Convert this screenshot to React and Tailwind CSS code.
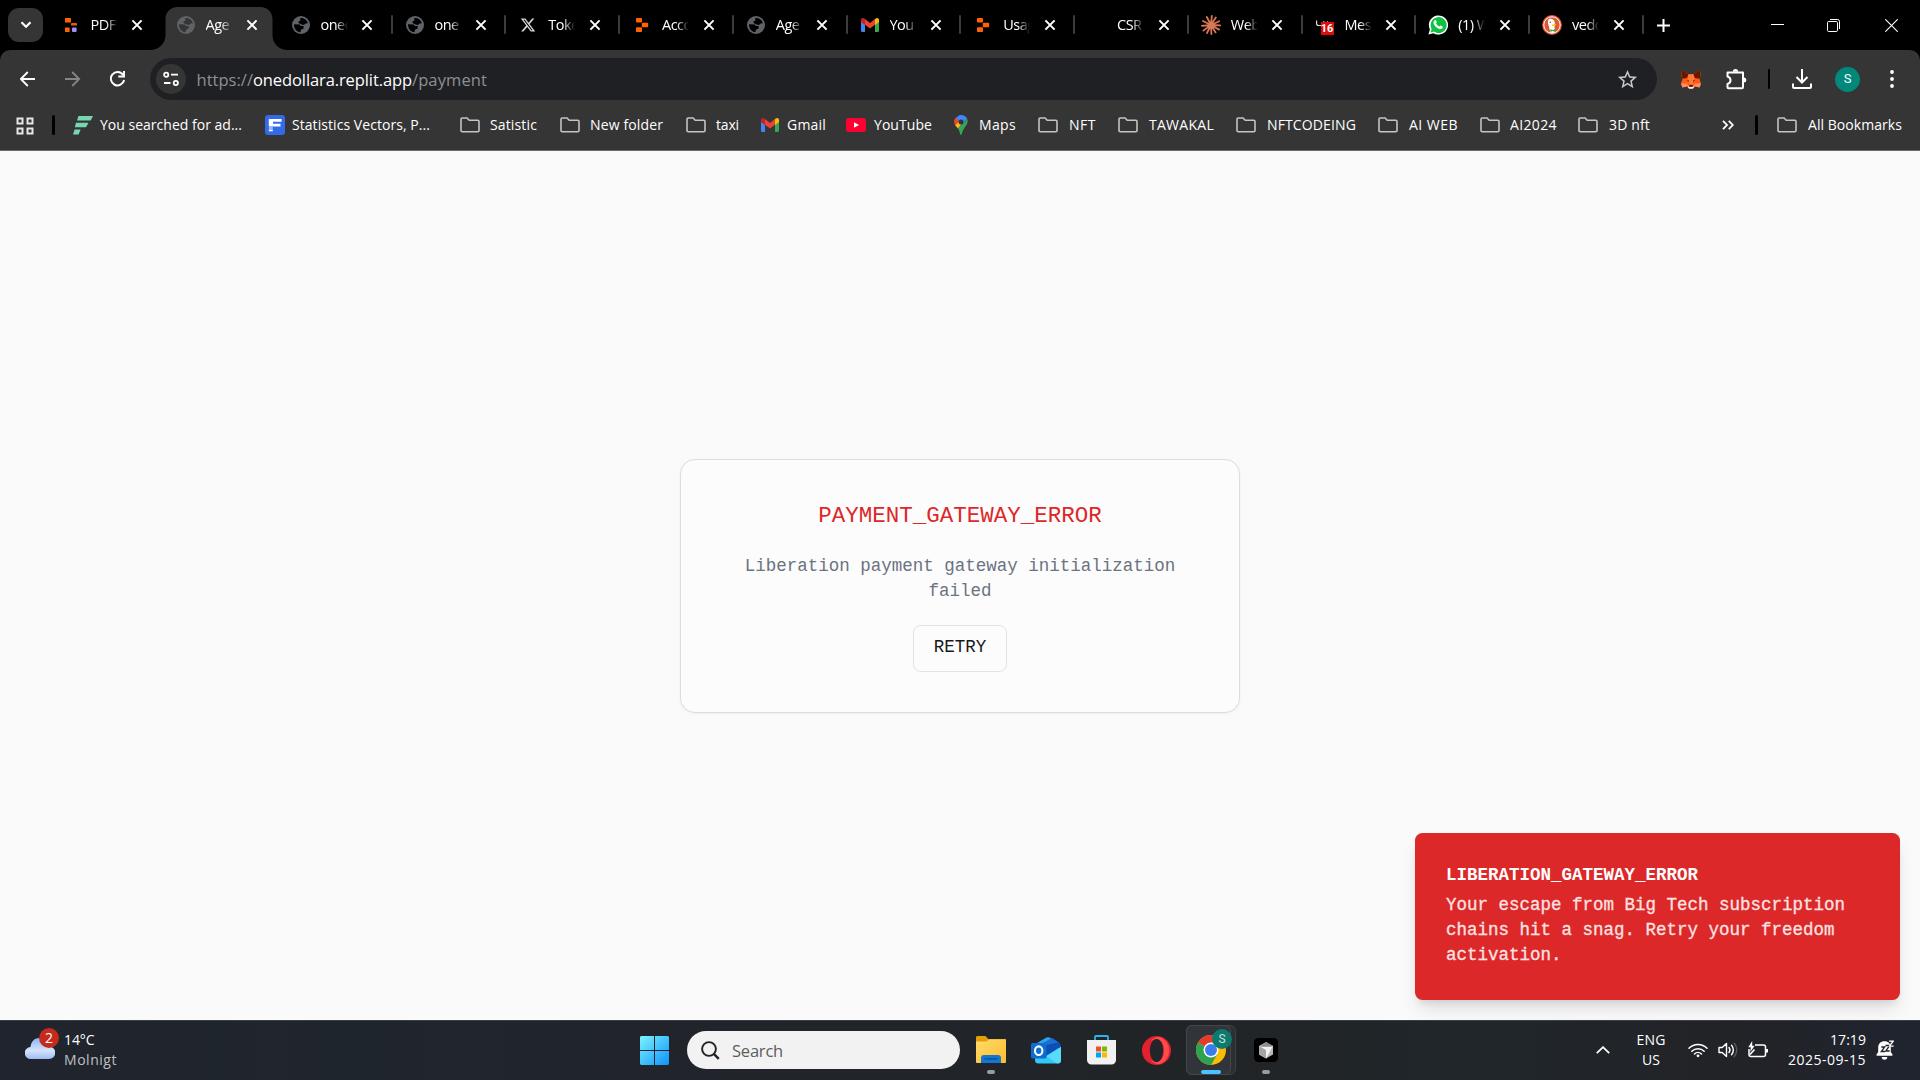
import { useLayoutEffect, useRef, useState } from "react";
import { FaXTwitter } from "react-icons/fa6";
import { MdStarBorder } from "react-icons/md";

/* Text spread over a fixed width by letter spacing. */
function Fit({ w, children, className = "" }) {
  const ref = useRef(null);
  const [spacing, setSpacing] = useState(0);
  useLayoutEffect(() => {
    const natural = ref.current.getBoundingClientRect().width;
    setSpacing((w - natural) / String(children).length);
  }, []);
  return (
    <span ref={ref} className={`inline-block shrink-0 whitespace-pre ${className}`} style={{ letterSpacing: `${spacing}px` }}>
      {children}
    </span>
  );
}

/* ---------- favicons ---------- */
const Globe = ({ active }) => (
  <svg viewBox="0 0 18 18" className="h-[18px] w-[18px]">
    <circle cx="9" cy="9" r="9" fill="#5f6368" />
    <g className={active ? "fill-[#353535]" : "fill-black"}>
      <path d="M2 8.200 7.600 8.600 9 10h2.600v2.600l-2.400.9-.8 2.700C4.800 15.800 1.800 12.600 2 8.200z" />
      <path d="M8.200 2.100C12.200 1.900 15 4 15.900 7.200L13.600 7.400 12 9 9.600 8.400 7 7.200 6.200 5.800 8.400 4.600z" />
    </g>
  </svg>
);

const ReplitMulti = () => (
  <svg viewBox="0 0 14 16" className="h-4 w-3.5">
    <rect x="1" y="1" width="6" height="4.5" rx=".6" fill="#ff6200" />
    <rect x="7" y="6" width="6" height="2.6" rx=".4" fill="#e85c00" />
    <rect x="1" y="10.5" width="4.6" height="4.5" rx=".6" fill="#ff6200" />
    <rect x="8" y="10.5" width="4.6" height="4.5" rx="1" fill="#a78bfa" />
  </svg>
);

const Replit = () => (
  <svg viewBox="0 0 14 16" className="h-4 w-3.5">
    <rect x="1" y="1" width="6" height="4.6" rx=".8" fill="#ff6200" />
    <rect x="6.8" y="5.7" width="6.4" height="4.5" rx=".8" fill="#ff6200" />
    <rect x="1" y="10.3" width="6" height="4.7" rx=".8" fill="#ff6200" />
  </svg>
);

const Gmail = () => (
  <svg viewBox="0 0 18 14" className="h-3.5 w-[18px]">
    <path d="M0 3v9.8c0 .7.5 1.2 1.2 1.2H4V6z" fill="#4285f4" />
    <path d="M18 3v9.8c0 .7-.5 1.2-1.2 1.2H14V6z" fill="#34a853" />
    <path d="M14 1.2V7l4-3V1.9C18 .2 16-.6 14.7.5z" fill="#fbbc04" />
    <path d="M4 6.8V1.1l5 3.8 5-3.8v5.7L9 10.6z" fill="#ea4335" />
    <path d="M0 1.9V4l4 3V1.2L3.3.5C2-.6 0 .2 0 1.9z" fill="#c5221f" />
  </svg>
);

const Claude = () => (
  <svg viewBox="0 0 20 20" className="h-5 w-5" stroke="#d97757" strokeWidth="1.8" strokeLinecap="round">
    <path d="M10 10 10.8 1M10 10 14.8 2.4M10 10 18.2 6.2M10 10 19.2 10.4M10 10 18 14.6M10 10 14.6 17.4M10 10 10.4 19M10 10 6 18M10 10 2.4 15.6M10 10 .9 10.9M10 10 2 6M10 10 5.8 2" />
  </svg>
);

const Messenger16 = () => (
  <span className="relative block h-5 w-5">
    <svg viewBox="0 0 20 20" className="h-5 w-5">
      <path d="M1.600 5.500V8.500c0 1.300.8 2 2.200 2H6" stroke="#ddd" strokeWidth="1.200" fill="none" />
      <path d="M8 6.500h1.500M12 6.500h1" stroke="#999" strokeWidth="1" />
    </svg>
    <span className="absolute top-[7px] left-[6px] flex h-[13px] w-[13px] items-center justify-center bg-[#e00b0b] font-['Roboto'] text-[11px] leading-none font-bold text-white">
      16
    </span>
  </span>
);

const WhatsApp = () => (
  <svg viewBox="0 0 20 20" className="h-5 w-5">
    <path d="M.4 19.6 1.9 14.4A9.6 9.6 0 1 1 5.4 18.2z" fill="#fff" />
    <path d="M2.5 17.5 3.6 13.9A8 8 0 1 1 6 16.6z" fill="#0fc143" />
    <path d="M6.8 5.3c.5-.4 1-.3 1.2.1l.7 1.6c.1.3 0 .5-.7 1.3.8 1.6 2 2.6 3.5 3.3.8-1 1-1.100 1.300-1l1.700.800c.4.200.4.600.2 1.100-.6 1.500-2.200 1.800-3.900 1.200-2.400-.900-4.700-3.300-5.200-5.500-.200-1.200.3-2.200 1.200-2.900z" fill="#fff" />
  </svg>
);

const Duck = () => (
  <svg viewBox="0 0 20 20" className="h-5 w-5">
    <circle cx="10" cy="10" r="9.9" fill="#de5833" />
    <circle cx="10" cy="10" r="8.2" fill="none" stroke="#fff" strokeWidth="1" />
    <path d="M6 6.200C6.200 4 8 3.600 9.600 4c2.200.4 3.300 2 3.200 4.200l-.3 2.800.5 6.300c-1.700.8-3.400.8-4.800.3L7 11.600c-.6-1.700-1.300-3.600-1-5.400z" fill="#fff" />
    <path d="M10 9.600c1.300-.7 3-.7 4.300-.3-.8 1.200-2.400 1.900-4.300 1.700z" fill="#fdd20a" />
    <path d="M8.200 14.200l2.600.8 2.600-.9v2.800l-2.600-.8-2.600.7z" fill="#3ca82b" />
    <circle cx="8.200" cy="7.200" r=".7" fill="#2d4f8e" />
  </svg>
);

const Blank = () => <span className="block h-5 w-5" />;

const CloseX = ({ className = "" }) => (
  <svg viewBox="0 0 12 12" className={`h-3 w-3 shrink-0 ${className}`} stroke="#fff" strokeWidth="2">
    <path d="M1.400 1.400 10.600 10.600M10.600 1.400 1.400 10.600" />
  </svg>
);

const TABS = [
  { title: "PDF", icon: ReplitMulti, cls: "w-[115px]" },
  { title: "Age", icon: Globe, cls: "w-[115px]", active: true },
  { title: "oned", icon: Globe, cls: "w-[114px]", sep: true },
  { title: "one", icon: Globe, sep: true },
  { title: "Toke", icon: () => <FaXTwitter className="h-4 w-4 text-[#d8d8d8]" />, sep: true },
  { title: "Acco", icon: Replit, sep: true },
  { title: "Age", icon: Globe, sep: true },
  { title: "You", icon: Gmail, sep: true },
  { title: "Usag", icon: Replit, sep: true },
  { title: "CSR", icon: Blank, sep: true },
  { title: "Web", icon: Claude, sep: true },
  { title: "Mes", icon: Messenger16, sep: true },
  { title: "(1) W", icon: WhatsApp, sep: true },
  { title: "vedd", icon: Duck, sep: true },
];

function Tab({ title, icon: Icon, cls = "w-[113.75px]", active, sep }) {
  return (
    <div className={`relative flex h-[50px] shrink-0 items-center ${cls}`}>
      {active && (
        <svg viewBox="0 0 138 43" className="absolute bottom-0 left-[-13px] h-[43px] w-[138px]" fill="#353535">
          <path d="M0 43c8 0 15.500-6 15.500-15V12c0-7 5-12 12-12h83c7 0 12 5 12 12v16c0 9 7 15 15.500 15z" />
        </svg>
      )}
      <span className="relative ml-3 flex h-6 w-[22px] shrink-0 items-center justify-center">
        <Icon active={active} />
      </span>
      <span className="relative ml-[9px] w-[27px] shrink-0 overflow-hidden text-[14.5px] leading-5 tracking-[-0.5px] whitespace-nowrap text-white [mask-image:linear-gradient(to_right,#000_55%,transparent_100%)]">
        {title}
      </span>
      <CloseX className="relative ml-[13.500px]" />
      {sep && <span className="absolute top-[15px] right-[-1px] h-[19px] w-0.5 rounded bg-[#3c3c3c]" />}
    </div>
  );
}

/* ---------- bookmarks ---------- */
const Folder = () => (
  <svg viewBox="0 0 20 16" className="h-4 w-5" fill="none" stroke="#c4c4c4" strokeWidth="1.600">
    <path d="M1 2.200C1 1.500 1.500 1 2.200 1h4.900l2.100 2.300h8.600c.7 0 1.200.5 1.200 1.200v9c0 .7-.5 1.200-1.200 1.200H2.200c-.7 0-1.200-.5-1.200-1.200z" />
  </svg>
);
const FreeF = () => (
  <svg viewBox="0 0 20 19" className="h-[19px] w-5" fill="#76d7b0">
    <path d="M5.500 0H20l-2.300 4.600H4zM3 6.800h12.500L13 11.200H1.800zM1.600 13.600h6L5.600 18.500H0z" />
  </svg>
);
const BlueF = () => (
  <svg viewBox="0 0 20 20" className="h-5 w-5">
    <rect width="20" height="20" rx="3" fill="#336aea" />
    <path d="M3.800 4h12.800v2.800H8v2h7.500v2.800H3.800zM3.800 12.600h4v1h-4zM3.800 14.600h4v1.600h-4z" fill="#fff" />
  </svg>
);
const YouTube = () => (
  <svg viewBox="0 0 20 14" className="h-3.5 w-5">
    <rect width="20" height="14" rx="3" fill="#ff0033" />
    <path d="M8 4.200v5.600L13 7z" fill="#fff" />
  </svg>
);
const MapsPin = () => (
  <svg viewBox="0 0 14 20" className="h-5 w-[14px]">
    <path d="M7 0a7 7 0 0 1 6.300 4L4.200 13.200 1.600 10.500A7 7 0 0 1 7 0z" fill="#4285f4" />
    <path d="M1.500 2.700 7 7.200 2.200 11.500A7 7 0 0 1 1.500 2.700z" fill="#ea4335" />
    <path d="M1.300 10.200 7 4.500v5l-3 4z" fill="#fbbc04" />
    <path d="M13.400 4.200C15 9 10 12 8.200 17.500 7.800 19.200 7.500 20 7 20s-.8-.8-1.100-2c-.4-1.800-1-3.200-1.900-4.500z" fill="#34a853" />
    <circle cx="7" cy="7" r="2.500" fill="#353535" />
  </svg>
);

const BOOKMARKS = [
  { cell: "ml-[15px]", gap: "ml-[7px]", icon: FreeF, text: "You searched for ad...", w: 142 },
  { cell: "ml-[23px]", gap: "ml-[7px]", icon: BlueF, text: "Statistics Vectors, P...", w: 138 },
  { cell: "ml-[30px]", gap: "ml-[10px]", icon: Folder, text: "Satistic", w: 47 },
  { cell: "ml-[23px]", gap: "ml-[10px]", icon: Folder, text: "New folder", w: 73 },
  { cell: "ml-[23px]", gap: "ml-[10px]", icon: Folder, text: "taxi", w: 23 },
  { cell: "ml-[22px]", gap: "ml-[8px]", icon: Gmail, text: "Gmail", w: 39 },
  { cell: "ml-[20px]", gap: "ml-[8px]", icon: YouTube, text: "YouTube", w: 58 },
  { cell: "ml-[22px]", gap: "ml-[11px]", icon: MapsPin, text: "Maps", w: 37 },
  { cell: "ml-[22px]", gap: "ml-[11px]", icon: Folder, text: "NFT", w: 27 },
  { cell: "ml-[22px]", gap: "ml-[11px]", icon: Folder, text: "TAWAKAL", w: 65 },
  { cell: "ml-[22px]", gap: "ml-[11px]", icon: Folder, text: "NFTCODEING", w: 89 },
  { cell: "ml-[22px]", gap: "ml-[11px]", icon: Folder, text: "AI WEB", w: 49 },
  { cell: "ml-[22px]", gap: "ml-[10px]", icon: Folder, text: "AI2024", w: 47 },
  { cell: "ml-[21px]", gap: "ml-[11px]", icon: Folder, text: "3D nft", w: 41 },
];

function Bookmark({ cell, gap, icon: Icon, text, w }) {
  return (
    <div className={`flex shrink-0 items-center ${cell}`}>
      <Icon />
      <Fit w={w} className={`text-[14px] leading-5 text-white ${gap}`}>{text}</Fit>
    </div>
  );
}

/* ---------- toolbar ---------- */
const Fox = () => (
  <svg viewBox="0 0 20 19" className="h-[19px] w-5">
    <path d="M1.200 0 7.500 4.300h5L18.800 0 19.800 4.500 18.600 9.500 20 13.500 18.600 17.600 14.200 16.600 12 18.600H8L5.800 16.600 1.400 17.600 0 13.500 1.400 9.500.2 4.500z" fill="#ff5c16" />
    <path d="M1.200 0 7.500 4.300 6 8 1.400 8.800.4 4.500zM18.800 0 12.500 4.300 14 8l4.600.8 1-4.300z" fill="#661800" />
    <path d="M7.500 4.300h5L13.200 9 11.600 14H8.400L6.800 9z" fill="#ff7a3a" />
    <path d="M0 13.500h6l1.500 2.300-1.700.8-4.400 1zM20 13.500h-6l-1.500 2.300 1.700.8 4.400 1z" fill="#ff8d5d" />
    <path d="M5.600 10.200l2.300.4.100 1.200zM14.400 10.200l-2.300.4-.1 1.200z" fill="#3a1a10" />
    <path d="M7.400 15.800 8.400 17h3.200l1-1.200.3 1.700-1 1.300H8.100l-1-1.300z" fill="#f3ecf5" />
    <path d="M8.500 15h3l.3 1.700H8.200z" fill="#3a1a10" />
  </svg>
);

function TabStrip() {
  return (
    <div className="flex h-[50px] bg-black">
      <div className="mt-2 ml-2 flex h-[34px] w-[35px] shrink-0 items-center justify-center rounded-[11px] bg-[#353535]">
        <svg viewBox="0 0 12 8" className="h-2 w-3" fill="none" stroke="#fff" strokeWidth="2.200">
          <path d="M1.500 1.200 6 5.700l4.500-4.500" />
        </svg>
      </div>
      <div className="ml-[4.500px] flex shrink-0">
        {TABS.map((t, i) => (
          <Tab key={i} {...t} />
        ))}
      </div>
      <div className="flex flex-1 items-center">
        <svg viewBox="0 0 13 13" className="ml-[14.500px] h-[13px] w-[13px]" stroke="#fff" strokeWidth="2">
          <path d="M6.500 0v13M0 6.500h13" />
        </svg>
        <svg viewBox="0 0 13 13" className="ml-[101px] h-[13px] w-[13px]" stroke="#fff" strokeWidth="1">
          <path d="M0 5.500h13" />
        </svg>
        <svg viewBox="0 0 13 13" className="ml-[43px] h-[13px] w-[13px]" fill="none" stroke="#fff" strokeWidth="1">
          <rect x=".5" y="2.500" width="10" height="10" rx="1.200" />
          <path d="M3 .5h7.500a2 2 0 0 1 2 2V10" />
        </svg>
        <svg viewBox="0 0 13 13" className="ml-[45px] h-[13px] w-[13px]" stroke="#fff" strokeWidth="1.100">
          <path d="M.3.3l12.400 12.400M12.700.3.3 12.700" />
        </svg>
      </div>
    </div>
  );
}

function Toolbar() {
  return (
    <div className="flex h-[58px] items-center">
      <svg viewBox="0 0 16 16" className="ml-5 h-4 w-4" fill="none" stroke="#fff" strokeWidth="1.800">
        <path d="M15 8H1M7.800 1 .8 8l7 7" />
      </svg>
      <svg viewBox="0 0 16 16" className="ml-[29px] h-4 w-4" fill="none" stroke="#858585" strokeWidth="1.800">
        <path d="M0 8h14M7.200 1l7 7-7 7" />
      </svg>
      <svg viewBox="0 0 16 16" className="ml-[29px] h-4 w-4" fill="none" stroke="#fff" strokeWidth="2">
        <path d="M13.100 4A6.700 6.700 0 1 0 14.100 9" />
        <path d="M14 0v5.500H8.300" strokeWidth="1.900" />
      </svg>
      <div className="ml-[24px] flex h-[42px] w-[1507px] items-center rounded-full bg-[#1f2024]">
        <div className="ml-[6px] flex h-[30px] w-[30px] items-center justify-center rounded-full bg-[#353535]">
          <svg viewBox="0 0 16 16" className="h-4 w-4" fill="none" stroke="#fff" strokeWidth="1.800">
            <circle cx="3.200" cy="3.700" r="2.100" />
            <path d="M8 3.700h7M1 12h6.500" />
            <circle cx="12.800" cy="12" r="2.100" />
          </svg>
        </div>
        <div className="mt-px ml-[10.500px] flex text-[16.500px] leading-6">
          <Fit w={56.500} className="text-[#8e8f92]">https://</Fit>
          <Fit w={159} className="text-white">onedollara.replit.app</Fit>
          <Fit w={75} className="text-[#8e8f92]">/payment</Fit>
        </div>
        <MdStarBorder className="mr-[18px] ml-auto h-[23px] w-[23px] text-[#c7c7c7]" />
      </div>
      <div className="ml-[23.500px]"><Fox /></div>
      <svg viewBox="0 0 21 21" className="ml-[25.500px] h-[21px] w-[21px]" fill="none" stroke="#fff" strokeWidth="2">
        <path d="M1.500 3.500H17v14.700c0 .6-.4 1-1 1H2.500c-.6 0-1-.4-1-1V15c4-1 4-6.500 0-7.500z" strokeLinejoin="round" />
        <path d="M6.800 2.800a2.700 2.700 0 0 1 5.400 0zM17.800 8.600a2.500 2.500 0 0 1 0 5z" fill="#fff" stroke="none" />
      </svg>
      <span className="ml-[21px] h-5 w-0.5 rounded bg-black" />
      <svg viewBox="0 0 20 20" className="ml-[22px] h-5 w-5" fill="none" stroke="#fff" strokeWidth="2">
        <path d="M10 0v13M4.500 8l5.500 5.500L15.500 8M1 14.500V18c0 .6.400 1 1 1h16c.6 0 1-.4 1-1v-3.500" />
      </svg>
      <span className="ml-[23px] flex h-[25px] w-[25px] items-center justify-center rounded-full bg-[#00897b] font-['Roboto'] text-[13px] text-white">S</span>
      <svg viewBox="0 0 4 20" className="ml-[30px] h-5 w-1" fill="#fff">
        <circle cx="2" cy="3" r="1.900" /><circle cx="2" cy="10" r="1.900" /><circle cx="2" cy="17" r="1.900" />
      </svg>
    </div>
  );
}

function BookmarksBar() {
  return (
    <div className="flex h-[42px] items-center pb-2">
      <svg viewBox="0 0 18 18" className="mt-px ml-[15.500px] h-[18px] w-[18px] shrink-0" fill="none" stroke="#e6e6e6" strokeWidth="2">
        <path d="M1.500 1.500h5v5h-5zM11.500 1.500h5v5h-5zM1.500 11.500h5v5h-5zM11.500 11.500h5v5h-5z" />
      </svg>
      <span className="ml-[18.500px] h-5 w-[3px] shrink-0 rounded bg-black" />
      <div className="ml-[3px] flex items-center">
        {BOOKMARKS.map((b) => (
          <Bookmark key={b.text} {...b} />
        ))}
      </div>
      <svg viewBox="0 0 12 10" className="ml-auto h-2.5 w-3 shrink-0" fill="none" stroke="#fff" strokeWidth="1.800">
        <path d="M1 .8 5 5 1 9.200M6.800.8l4 4.200-4 4.200" />
      </svg>
      <span className="ml-[21px] h-5 w-[3px] shrink-0 rounded bg-black" />
      <div className="mr-[18px] ml-[19px] flex items-center">
        <Folder />
        <Fit w={94} className="ml-[11px] text-[14px] leading-5 text-white">All Bookmarks</Fit>
      </div>
    </div>
  );
}

/* ---------- page ---------- */
function Page() {
  return (
    <main className="relative flex h-[869px] items-center justify-center overflow-hidden bg-[#fafafa] font-['Courier_New','Liberation_Mono',monospace]">
      <section className="flex h-[254px] w-[560px] flex-col items-center rounded-[15px] border border-[#dcdde2] bg-[#fcfcfc] px-10 pt-[41px] text-center shadow-[0_1px_3px_rgba(0,0,0,0.05)]">
        <h1 className="text-[22.500px] leading-[31px] text-[#dc2828]">PAYMENT_GATEWAY_ERROR</h1>
        <p className="mt-[22px] text-[17.500px] leading-[25px] text-[#6b7280]">Liberation payment gateway initialization failed</p>
        <button className="mt-[21.500px] flex h-[47px] w-[94px] shrink-0 items-center justify-center rounded-[7.500px] border border-[#e2e3e6] bg-[#fcfcfc] pb-0.5 text-[17.500px] text-[#18181b]">
          RETRY
        </button>
      </section>
      <aside className="absolute right-5 bottom-5 flex h-[167px] w-[485px] flex-col rounded-[7.500px] bg-[#dc2828] px-[31px] pt-[30px] text-[17.500px] leading-[25px] shadow-[0_12px_19px_-4px_rgba(0,0,0,0.12),0_5px_8px_-4px_rgba(0,0,0,0.12)]">
        <strong className="font-bold text-white">LIBERATION_GATEWAY_ERROR</strong>
        <p className="mt-[5px] text-[#fbe2e2] [-webkit-text-stroke:0.3px_#fbe2e2]">
          Your escape from Big Tech subscription chains hit a snag. Retry your freedom activation.
        </p>
      </aside>
    </main>
  );
}

/* ---------- taskbar ---------- */
function Weather() {
  return (
    <div className="flex w-[640px] shrink-0">
      <div className="relative ml-[25px] h-[59px] w-[35px] shrink-0">
        <svg viewBox="0 0 30 21" className="absolute top-[17px] left-0 h-[21px] w-[30px]">
          <defs>
            <linearGradient id="cloud" x1="0" y1="0" x2="0" y2="1">
              <stop offset="0" stopColor="#8fb4f5" /><stop offset=".6" stopColor="#d5e3fb" /><stop offset="1" stopColor="#9cbcf4" />
            </linearGradient>
          </defs>
          <path d="M6 21a6 6 0 0 1-.5-12C6 4 9 0 14 0c5 0 8 3.500 8.600 8.500H24a6.200 6.200 0 0 1 0 12.500z" fill="url(#cloud)" />
        </svg>
        <span className="absolute top-[7px] left-[14px] flex h-5 w-5 items-center justify-center rounded-full bg-[#c42b1c] text-[14px] leading-none text-white">2</span>
      </div>
      <div className="mt-[9px] ml-1 flex flex-col items-start text-[14px] leading-5">
        <Fit w={30.500} className="text-white">14°C</Fit>
        <Fit w={53} className="text-[#bfc0c2]">Molnigt</Fit>
      </div>
    </div>
  );
}

const Windows = () => (
  <svg viewBox="0 0 29 29" className="h-[29px] w-[29px] shrink-0">
    <defs>
      <linearGradient id="win" gradientUnits="userSpaceOnUse" x1="0" y1="0" x2="29" y2="29">
        <stop offset="0" stopColor="#7df3ff" /><stop offset="1" stopColor="#0c93fb" />
      </linearGradient>
    </defs>
    <path d="M1 0h13v14H0V1zM15 0h13l1 1v13H15zM0 15h14v14H1l-1-1zM15 15h14v13l-1 1H15z" fill="url(#win)" />
  </svg>
);
const Explorer = () => (
  <svg viewBox="0 0 30 28" className="h-7 w-[30px]">
    <defs>
      <linearGradient id="exp" x1="0" y1="0" x2="1" y2="1"><stop offset="0" stopColor="#ffdb6b" /><stop offset="1" stopColor="#fdbc2c" /></linearGradient>
    </defs>
    <path d="M0 1.500C0 .7.600 0 1.500 0h8l3 3.200H29c.6 0 1 .4 1 1V10H0z" fill="#dfa00c" />
    <path d="M0 5.500h10.500l2.500-2.300h16c.6 0 1 .4 1 1V26a1 1 0 0 1-1 1H1a1 1 0 0 1-1-1z" fill="url(#exp)" />
    <path d="M5 27v-5a3 3 0 0 1 3-3h14a3 3 0 0 1 3 3v5z" fill="#1177d0" />
    <path d="M9 22.800h12" stroke="#0a4a8c" strokeWidth="1.300" strokeLinecap="round" />
  </svg>
);
const Outlook = () => (
  <svg viewBox="0 0 30 27" className="h-[27px] w-[30px]">
    <path d="M6 6 15.500.6a3 3 0 0 1 3 0L28 6l2 4-14 8-10-4z" fill="#2fa4ea" />
    <path d="M15 15 29 5.500l1 3.500v4l-14 7z" fill="#0a44a6" />
    <path d="M12 6l9-5 7 4.500L15 14z" fill="#1a6fd0" />
    <path d="M4 14h12l14-4v13a3.500 3.500 0 0 1-3.500 3.500H7.500A3.500 3.500 0 0 1 4 23z" fill="#35c8f5" />
    <path d="M15 19 30 10v13a3.500 3.500 0 0 1-3.500 3.500z" fill="#59dcfb" />
    <path d="M14 8.500 27.500 5.200 30 9.500 15 19z" fill="#0b4fb5" />
    <rect y="6" width="15.500" height="15.500" rx="1.500" fill="#0f6cd0" />
    <ellipse cx="7.700" cy="13.700" rx="3.700" ry="4.300" fill="none" stroke="#fff" strokeWidth="2.100" />
  </svg>
);
const Store = () => (
  <svg viewBox="0 0 29 30" className="h-[30px] w-[29px]">
    <path d="M8 6V1.800C8 1.300 8.300 1 8.800 1h11.400c.5 0 .8.300.8.800V6" fill="none" stroke="#25b4ec" strokeWidth="1.800" />
    <path d="M0 5h29v20a4.500 4.500 0 0 1-4.500 4.500h-20A4.500 4.500 0 0 1 0 25z" fill="#f1f1f1" />
    <path d="M9 11.500h5v5H9z" fill="#f25022" /><path d="M15 11.500h5v5h-5z" fill="#7fba00" />
    <path d="M9 17.500h5v5H9z" fill="#00a4ef" /><path d="M15 17.500h5v5h-5z" fill="#ffb900" />
  </svg>
);
const Opera = () => (
  <svg viewBox="0 0 29 29" className="h-[29px] w-[29px]">
    <circle cx="14.500" cy="14.500" r="14.500" fill="#e3202e" />
    <path d="M18 1a14.500 14.500 0 0 1 0 27c-4 .5-7-1-9-4 9 4 13-1 13-9.500S18 1 9 5c2-3 5-4.500 9-4z" fill="#ff4b4b" />
    <ellipse cx="14.500" cy="14.500" rx="6.700" ry="11.500" fill="#22262a" />
  </svg>
);
const Chrome = () => (
  <svg viewBox="0 0 30 30" className="h-[30px] w-[30px]">
    <circle cx="15" cy="15" r="15" fill="#fbbc04" />
    <path d="M15 15 2 7.500A15 15 0 0 1 28 7.500H15z" fill="#e33b2e" />
    <path d="M2 7.500A15 15 0 0 0 15 30l6.500-11.300L15 15z" fill="#2fa24f" />
    <circle cx="15" cy="15" r="7.500" fill="#fff" />
    <circle cx="15" cy="15" r="6" fill="#3b7ded" />
  </svg>
);
const Cursor = () => (
  <svg viewBox="0 0 24 24" className="h-6 w-6">
    <rect width="24" height="24" rx="4.500" fill="#000" />
    <path d="M12 4l7 4v8.500L12 20.500l-7-4V8z" fill="#b9b9b9" />
    <path d="M5 8l7 4v8.500l-7-4z" fill="#a4a4a4" />
    <path d="M5 8h14l-7 12.500V12z" fill="#f2f2f2" />
    <path d="M12 4l7 4-2 .8H6z" fill="#8c8c8c" />
  </svg>
);

function Taskbar() {
  return (
    <footer className="flex h-[60px] border-t border-[#3c3f43] bg-[linear-gradient(90deg,#20242e_0%,#1f262b_18%,#21252b_35%,#212427_60%,#20262a_78%,#222327_90%,#20242f_100%)]">
      <Weather />
      <div className="flex h-[58px] w-[29px] items-center"><Windows /></div>
      <div className="mt-[10px] ml-[18px] flex h-[38px] w-[273px] shrink-0 items-center rounded-full bg-[#f2f2f2]">
        <svg viewBox="0 0 19 19" className="ml-[14px] h-[19px] w-[19px]" fill="none" stroke="#222" strokeWidth="1.900">
          <circle cx="8" cy="8" r="6.900" />
          <path d="M12.800 12.800 17.800 17.800" strokeWidth="2.400" />
        </svg>
        <Fit w={51} className="mt-px ml-3 text-[16.500px] leading-6 text-[#5d5d5d]">Search</Fit>
      </div>
      <div className="ml-4 flex">
        {[Explorer, Outlook, Store, Opera, Chrome, Cursor].map((Icon, i) => (
          <div key={i} className="relative mr-[25px] flex h-[58px] w-[30px] items-center justify-center">
            {i === 4 && (
              <>
                <span className="absolute top-1 -left-2.5 h-[50px] w-[50px] rounded-[6px] border border-[#3d4044] bg-[#2b2e32]" />
                <span className="absolute top-1 -left-2.5 h-[50px] w-[45px] rounded-[6px] border border-[#43464a] bg-[#313438]" />
              </>
            )}
            <span className="relative flex"><Icon /></span>
            {i === 4 && (
              <>
                <span className="absolute top-[8px] left-4 flex h-5 w-5 items-center justify-center rounded-full bg-[#0c7a6f] font-['Roboto'] text-[12px] leading-none text-[#c5e3df]">S</span>
                <span className="absolute top-[49px] left-[5px] h-1 w-5 rounded-full bg-[#4cc2ff]" />
              </>
            )}
            {(i === 0 || i === 5) && <span className="absolute top-[49px] left-[11px] h-1 w-2 rounded-full bg-[#9a9b9c]" />}
          </div>
        ))}
      </div>
      <div className="mr-[26px] ml-auto flex h-[58px] items-center text-[14px] text-white">
        <svg viewBox="0 0 14 8" className="h-2 w-3.5" fill="none" stroke="#fff" strokeWidth="1.800"><path d="M.8 7.200 7 1.200l6.200 6" /></svg>
        <div className="ml-[25px] flex w-[32px] flex-col items-center leading-5">
          <Fit w={29}>ENG</Fit>
          <Fit w={18}>US</Fit>
        </div>
        <svg viewBox="0 0 20 16" className="ml-[21px] h-4 w-5" fill="none" stroke="#fff" strokeWidth="1.500" strokeLinecap="round">
          <path d="M1 6.200a12.700 12.700 0 0 1 18 0M3.800 9.300a8.800 8.800 0 0 1 12.400 0M6.500 12a5 5 0 0 1 7 0" />
          <circle cx="10" cy="13.800" r="1.400" fill="#fff" stroke="none" />
        </svg>
        <svg viewBox="0 0 20 18" className="ml-[10px] h-[18px] w-5" fill="none" stroke="#fff" strokeWidth="1.400" strokeLinecap="round" strokeLinejoin="round">
          <path d="M1 6.500h3.200L8.500 2.500v13l-4.300-4H1z" />
          <path d="M11 6.500a4 4 0 0 1 0 5M13.500 4.300a7 7 0 0 1 0 9.400" />
          <path d="M16.200 2.300a10 10 0 0 1 0 13.400" stroke="#55585c" />
        </svg>
        <svg viewBox="0 0 20 18" className="ml-[10px] h-[18px] w-5" fill="none" stroke="#fff" strokeWidth="1.500">
          <path d="M7 4h8.500a2 2 0 0 1 2 2v7.500a2 2 0 0 1-2 2H3a2 2 0 0 1-2-2V8" />
          <path d="M18 8h2v3.500h-2zM4.200 0 .3 6.300h2.500L2.300 11l4.300-6.200H4.200z" fill="#fff" stroke="none" />
          <path d="M2 13.500 6.500 8.500" strokeWidth="1.600" />
        </svg>
        <div className="ml-[20px] flex flex-col items-end leading-5">
          <Fit w={36}>17:19</Fit>
          <Fit w={78}>2025-09-15</Fit>
        </div>
        <svg viewBox="0 0 18 20" className="ml-[10px] h-5 w-[18px]">
          <path d="M8.500 1.200c3.900 0 6.300 2.700 6.300 6.300V12l1.700 2.600c.3.600 0 1.200-.6 1.200H1.100c-.6 0-.9-.6-.6-1.200L2.200 12V7.500c0-3.600 2.400-6.300 6.300-6.300zM5.700 17h5.600a2.800 2.800 0 0 1-5.600 0z" fill="#fff" />
          <path d="M5.300 7h3.400l-3.400 4.500h3.700M9.500 5.500h4.200l-4 5.500h4" stroke="#22252a" strokeWidth="1.300" fill="none" />
          <path d="M13 1.200h4.200l-3.800 5h4.200" stroke="#fff" strokeWidth="1.300" fill="none" />
        </svg>
      </div>
    </footer>
  );
}

export default function App() {
  return (
    <div className="flex h-[1080px] w-[1920px] flex-col overflow-hidden bg-black font-['Open_Sans','Noto_Sans',sans-serif]">
      <TabStrip />
      <div className="h-[101px] rounded-t-[10px] border-b border-[#6a6a6a] bg-[#353535]">
        <Toolbar />
        <BookmarksBar />
      </div>
      <Page />
      <Taskbar />
    </div>
  );
}
